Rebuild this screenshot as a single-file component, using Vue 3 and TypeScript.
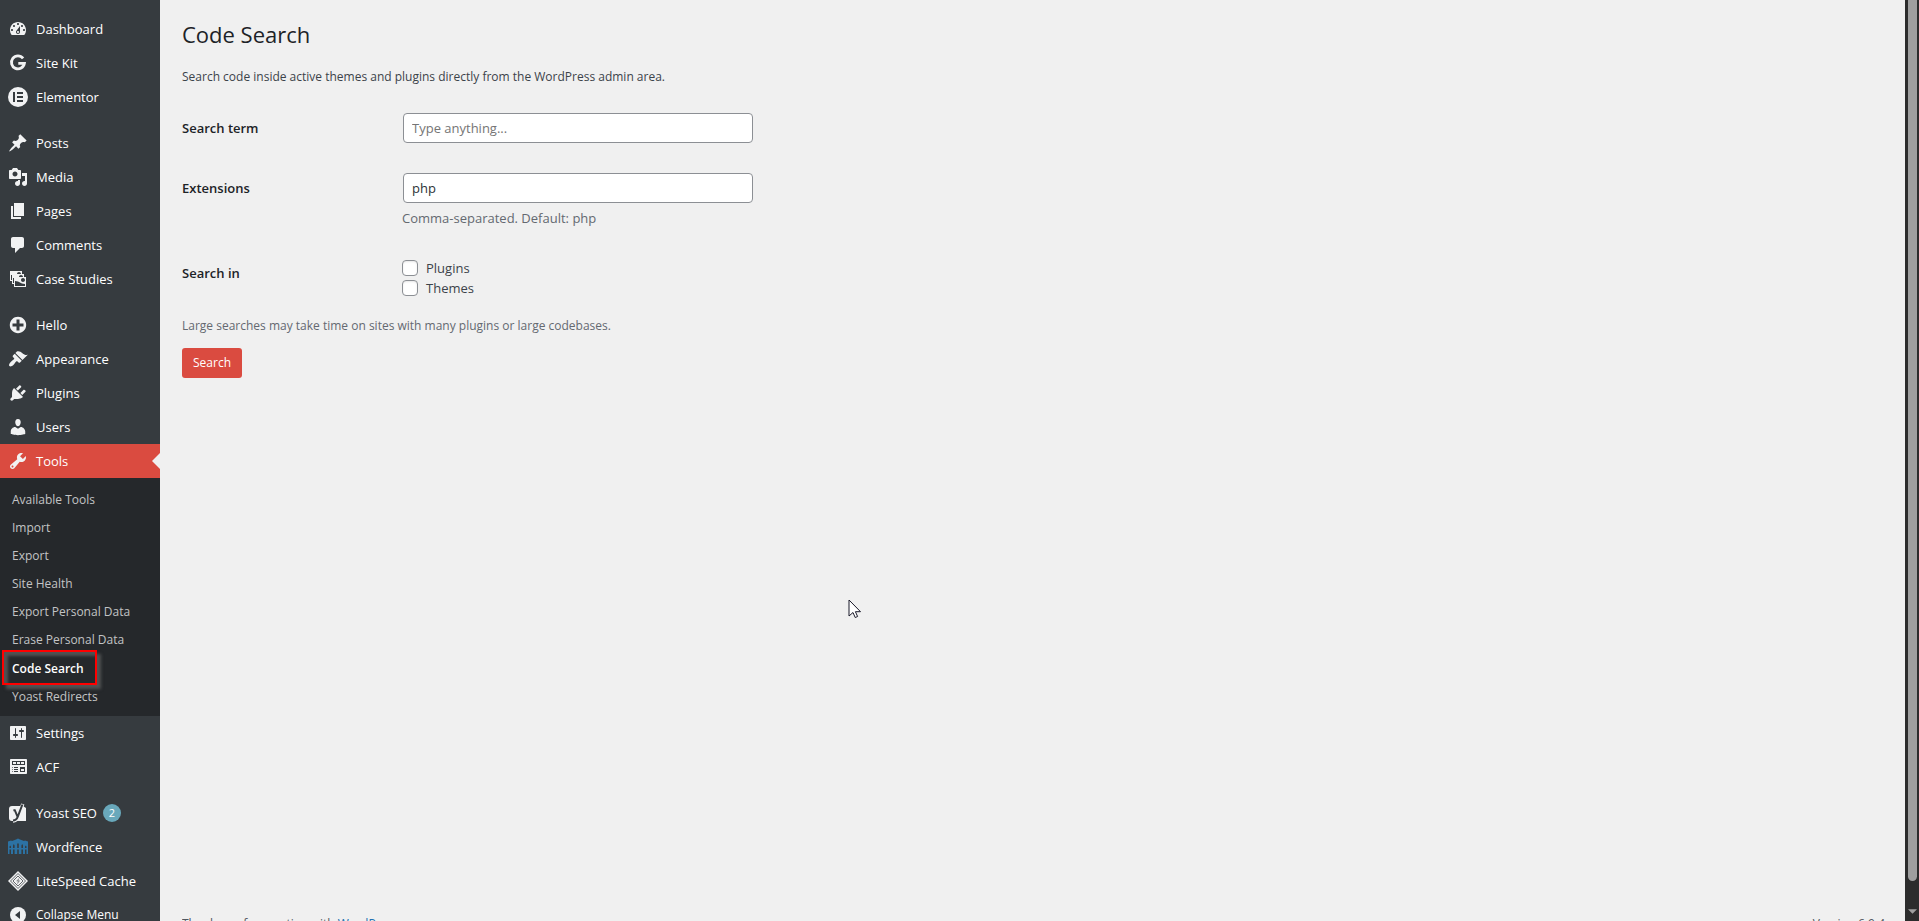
<script setup lang="ts">
import { ref } from 'vue'

interface MenuItem {
  label: string
  icon: string
  gap?: boolean
  current?: boolean
  badge?: number
}

const menu: MenuItem[] = [
  { label: 'Dashboard', icon: 'dashboard' },
  { label: 'Site Kit', icon: 'sitekit' },
  { label: 'Elementor', icon: 'elementor' },
  { label: 'Posts', icon: 'post', gap: true },
  { label: 'Media', icon: 'media' },
  { label: 'Pages', icon: 'page' },
  { label: 'Comments', icon: 'comments' },
  { label: 'Case Studies', icon: 'images' },
  { label: 'Hello', icon: 'plus', gap: true },
  { label: 'Appearance', icon: 'appearance' },
  { label: 'Plugins', icon: 'plugins' },
  { label: 'Users', icon: 'users' },
  { label: 'Tools', icon: 'tools', current: true },
  { label: 'Settings', icon: 'settings' },
  { label: 'ACF', icon: 'acf' },
  { label: 'Yoast SEO', icon: 'yoast', gap: true, badge: 2 },
  { label: 'Wordfence', icon: 'wordfence' },
  { label: 'LiteSpeed Cache', icon: 'litespeed' },
]

const submenu: string[] = [
  'Available Tools',
  'Import',
  'Export',
  'Site Health',
  'Export Personal Data',
  'Erase Personal Data',
  'Code Search',
  'Yoast Redirects',
]

const glyphs: Record<string, string> = {
  dashboard:
    'M3.76 16h12.48c1.12-1.37 1.76-3.11 1.76-5 0-4.42-3.58-8-8-8s-8 3.58-8 8c0 1.89.64 3.63 1.76 5zM10 4c.55 0 1 .45 1 1s-.45 1-1 1-1-.45-1-1 .45-1 1-1zM6 6c.55 0 1 .45 1 1s-.45 1-1 1-1-.45-1-1 .45-1 1-1zm8 0c.55 0 1 .45 1 1s-.45 1-1 1-1-.45-1-1 .45-1 1-1zm-5.37 5.55L12 7v6c0 1.1-.9 2-2 2s-2-.9-2-2c0-.57.24-1.08.63-1.45zM4 10c.55 0 1 .45 1 1s-.45 1-1 1-1-.45-1-1 .45-1 1-1zm12 0c.55 0 1 .45 1 1s-.45 1-1 1-1-.45-1-1 .45-1 1-1zm-5 3c0-.55-.45-1-1-1s-1 .45-1 1 .45 1 1 1 1-.45 1-1z',
  post: 'M10.44 3.02l1.82-1.82 6.36 6.35-1.83 1.82c-1.05-.68-2.48-.57-3.41.36l-.75.75c-.92.93-1.04 2.35-.35 3.41l-1.83 1.82-2.41-2.41-2.8 2.79c-.42.42-3.38 2.71-3.8 2.29s1.86-3.39 2.28-3.81l2.79-2.79L4.1 9.36l1.83-1.82c1.05.69 2.48.57 3.4-.36l.75-.75c.93-.92 1.05-2.35.36-3.41z',
  media:
    'M13 11V4c0-.55-.45-1-1-1h-1.67L9 1H5L3.67 3H2c-.55 0-1 .45-1 1v7c0 .55.45 1 1 1h10c.55 0 1-.45 1-1zM7 4.5c1.38 0 2.5 1.12 2.5 2.5S8.38 9.5 7 9.5 4.5 8.38 4.5 7 5.62 4.5 7 4.5zM14 6h5v10.5c0 1.38-1.12 2.5-2.5 2.5S14 17.88 14 16.5s1.12-2.5 2.5-2.5c.17 0 .34.02.5.05V9h-3V6zm-4 8.05V13h2v3.5c0 1.38-1.12 2.5-2.5 2.5S7 17.88 7 16.5 8.12 14 9.5 14c.17 0 .34.02.5.05z',
  page: 'M6 15V2h10v13H6zm-1 1h8v2H3V5h2v11z',
  comments:
    'M5 2h9c1.1 0 2 .9 2 2v7c0 1.1-.9 2-2 2h-2l-5 5v-5H5c-1.1 0-2-.9-2-2V4c0-1.1.9-2 2-2z',
  images:
    'M4 15v-3H2V2h12v3h2v3h2v10H6v-3H4zm7-12c-1.1 0-2 .9-2 2h4c0-1.1-.89-2-2-2zm-7 8V6H3v5h1zm7-3h4c0-1.1-.89-2-2-2-1.1 0-2 .9-2 2zm-5 6V9H5v5h1zm9-1c1.1 0 2-.89 2-2 0-1.1-.9-2-2-2s-2 .9-2 2c0 1.11.9 2 2 2zm2 4v-2c-5 0-5-3-10-3v5h10z',
  plus: 'M15.8 4.2c3.2 3.21 3.2 8.39 0 11.6-3.21 3.2-8.39 3.2-11.6 0C1 12.59 1 7.41 4.2 4.2 7.41 1 12.59 1 15.8 4.2zm-4.3 11.3v-4h4v-3h-4v-4h-3v4h-4v3h4v4h3z',
  appearance:
    'M14.48 11.06L7.41 3.99l1.5-1.5c.5-.56 2.3-.47 3.51.32 1.21.8 1.43 1.28 2.91 2.1 1.18.64 2.45 1.26 4.45.85zm-.71.71L6.7 4.7 4.93 6.47c-.39.39-.39 1.02 0 1.41l1.06 1.06c.39.39.39 1.03 0 1.42-.6.6-1.43 1.11-2.21 1.69-.35.26-.7.53-1.01.84C1.43 14.23.4 16.08 1.4 17.07c.99 1 2.84-.03 4.18-1.36.31-.31.58-.66.85-1.02.57-.78 1.08-1.61 1.69-2.21.39-.39 1.02-.39 1.41 0l1.06 1.06c.39.39 1.02.39 1.41 0z',
  plugins:
    'M13.11 4.36L9.87 7.6 8 5.73l3.24-3.24c.35-.34 1.05-.2 1.56.32.52.51.66 1.21.31 1.55zm-8 1.77l.91-1.12 9.01 9.01-1.19.84c-.71.71-2.63 1.16-3.82 1.16H6.14L4.9 17.26c-.59.59-1.54.59-2.12 0-.59-.58-.59-1.53 0-2.12l1.24-1.24v-3.88c0-1.13.4-3.19 1.09-3.89zm7.26 3.97l3.24-3.24c.34-.35 1.04-.21 1.55.31.52.51.66 1.21.31 1.55l-3.24 3.25z',
  users:
    'M10 9.25c-2.27 0-2.73-3.44-2.73-3.44C7 4.02 7.82 2 9.97 2c2.16 0 2.98 2.02 2.71 3.81 0 0-.41 3.44-2.68 3.44zm0 2.57L12.72 10c2.39 0 4.52 2.33 4.52 4.53v2.49s-3.65 1.13-7.24 1.13c-3.65 0-7.24-1.13-7.24-1.13v-2.49c0-2.25 1.94-4.48 4.47-4.48z',
  tools:
    'M16.68 9.77c-1.34 1.34-3.3 1.67-4.95.99l-5.41 6.52c-.99.99-2.59.99-3.58 0s-.99-2.59 0-3.57l6.52-5.42c-.68-1.65-.35-3.61.99-4.95 1.28-1.28 3.12-1.62 4.72-1.06l-2.89 2.89 2.82 2.82 2.86-2.87c.53 1.58.18 3.39-1.08 4.65zM3.81 16.21c.4.39 1.04.39 1.43 0 .4-.4.4-1.04 0-1.43-.39-.4-1.03-.4-1.43 0-.39.39-.39 1.03 0 1.43z',
  settings:
    'M18 16V4c0-.55-.45-1-1-1H3c-.55 0-1 .45-1 1v12c0 .55.45 1 1 1h14c.55 0 1-.45 1-1zM8 11h1c.55 0 1 .45 1 1s-.45 1-1 1H8v1.5c0 .28-.22.5-.5.5s-.5-.22-.5-.5V13H6c-.55 0-1-.45-1-1s.45-1 1-1h1V5.5c0-.28.22-.5.5-.5s.5.22.5.5V11zm5-2h-1c-.55 0-1-.45-1-1s.45-1 1-1h1V5.5c0-.28.22-.5.5-.5s.5.22.5.5V7h1c.55 0 1 .45 1 1s-.45 1-1 1h-1v5.5c0 .28-.22.5-.5.5s-.5-.22-.5-.5V9z',
  acf: 'M19 16V3c0-.55-.45-1-1-1H3c-.55 0-1 .45-1 1v13c0 .55.45 1 1 1h15c.55 0 1-.45 1-1zM4 4h13v4H4V4zm1 1v2h3V5H5zm4 0v2h3V5H9zm4 0v2h3V5h-3zm-8.5 5c.28 0 .5.22.5.5s-.22.5-.5.5-.5-.22-.5-.5.22-.5.5-.5zM6 10h4v1H6v-1zm6 0h5v5h-5v-5zm-7.5 2c.28 0 .5.22.5.5s-.22.5-.5.5-.5-.22-.5-.5.22-.5.5-.5zM6 12h4v1H6v-1zm7 0v2h3v-2h-3zm-8.5 2c.28 0 .5.22.5.5s-.22.5-.5.5-.5-.22-.5-.5.22-.5.5-.5zM6 14h4v1H6v-1z',
}

const term = ref('')
const extensions = ref('php')
const inPlugins = ref(false)
const inThemes = ref(false)
</script>

<template>
  <div class="screen">
    <nav class="sidebar" aria-label="Main menu">
      <ul class="menu">
        <li v-for="item in menu" :key="item.label" :class="{ gap: item.gap, current: item.current }">
          <a href="#" class="menu-link">
            <svg class="icon" viewBox="0 0 20 20" aria-hidden="true">
              <path v-if="glyphs[item.icon]" :d="glyphs[item.icon]" fill-rule="evenodd" />
              <path
                v-else-if="item.icon === 'sitekit'"
                class="stroke"
                stroke-width="2.8"
                d="M15.1 5.4A6.5 6.5 0 1 0 16.4 10.3H10.3"
              />
              <template v-else-if="item.icon === 'elementor'">
                <circle cx="10" cy="10" r="10" />
                <path class="hole" d="M5 5h2v10H5zM9 5h6v2H9zM9 9h6v2H9zM9 13h6v2H9z" />
              </template>
              <template v-else-if="item.icon === 'yoast'">
                <path d="M4 3h11l3 2v13H4a3 3 0 0 1-3-3V6a3 3 0 0 1 3-3z" />
                <path class="stroke" stroke-width="3.4" d="M14.8 1L10 14Q8.6 17.8 5 18" />
                <path class="hole-line" stroke-width="2" d="M5.4 7.2h1.400l2.800 6.600M14.400 1.500L9.800 13.600Q8.400 17.400 5 17.600" />
              </template>
              <template v-else-if="item.icon === 'wordfence'">
                <path
                  class="fence"
                  fill-rule="evenodd"
                  d="M0 4.500L3 3.500 4 4 8 2.500 10 1.500 12 2.500 16 4 17 3.500 20 4.500V17H18.500V9.500L17.800 8.500 17 9.500V17H15V8.500L14.200 7 13.400 8.500V17H10.800V7L10 6 9.200 7V17H6.600V8.500L5.800 7 5 8.500V17H3V9.500L2.200 8.500 1.500 9.500V17H0z"
                />
                <path class="fence" d="M1 11h18v1.500H1z" />
              </template>
              <template v-else>
                <path d="M10 0l10 10-10 10L0 10z" />
                <path class="ring" d="M10 2.500l7.500 7.500-7.500 7.500L2.500 10z" />
                <path class="ring" d="M10 5l5 5-5 5-5-5z" />
                <path class="bolt" d="M11.500 6.500L8 10.300h1.800l-.8 3.200 3.300-4h-1.700z" />
              </template>
            </svg>
            <span>{{ item.label }}</span>
            <span v-if="item.badge" class="badge">{{ item.badge }}</span>
          </a>
          <ul v-if="item.current" class="submenu">
            <li v-for="entry in submenu" :key="entry">
              <a href="#" :class="{ active: entry === 'Code Search' }">{{ entry }}</a>
            </li>
          </ul>
        </li>
        <li>
          <button type="button" class="menu-link collapse">
            <svg class="icon" viewBox="0 0 20 20" aria-hidden="true">
              <circle cx="10" cy="10" r="8" />
              <path class="hole" d="M12 6v8l-5-4z" />
            </svg>
            <span>Collapse Menu</span>
          </button>
        </li>
      </ul>
    </nav>

    <div class="page">
      <main class="content">
        <h1>Code Search</h1>
        <p class="intro">Search code inside active themes and plugins directly from the WordPress admin area.</p>
        <form @submit.prevent>
          <table class="form-table">
            <tbody>
              <tr>
                <th scope="row"><label for="term">Search term</label></th>
                <td><input id="term" v-model="term" class="field" type="text" placeholder="Type anything..." /></td>
              </tr>
              <tr>
                <th scope="row"><label for="extensions">Extensions</label></th>
                <td>
                  <input id="extensions" v-model="extensions" class="field" type="text" />
                  <p class="hint">Comma-separated. Default: php</p>
                </td>
              </tr>
              <tr>
                <th id="scope-label" scope="row">Search in</th>
                <td>
                  <fieldset aria-labelledby="scope-label">
                    <label class="option"><input v-model="inPlugins" type="checkbox" />Plugins</label>
                    <label class="option"><input v-model="inThemes" type="checkbox" />Themes</label>
                  </fieldset>
                </td>
              </tr>
            </tbody>
          </table>
          <p class="note">Large searches may take time on sites with many plugins or large codebases.</p>
          <button type="submit" class="submit">Search</button>
        </form>
      </main>
      <footer class="footer">
        <span>Thank you for creating with <a href="#">WordPress</a>.</span>
        <span>Version 6.9.4</span>
      </footer>
    </div>

    <div class="scrollbar" aria-hidden="true">
      <div class="thumb"></div>
      <svg class="arrow" viewBox="0 0 10 5"><path d="M0 0h10L5 5z" /></svg>
    </div>

    <svg class="pointer" viewBox="0 0 14 20" aria-hidden="true">
      <path d="M1 1v16l4-3.500 2.200 5 2.400-1-2.200-4.800H12.500z" />
    </svg>
  </div>
</template>

<style>
body {
  margin: 0;
  background: #f0f0f1;
}
</style>

<style scoped>
.screen {
  position: relative;
  display: flex;
  height: 100vh;
  overflow: hidden;
  background: #f0f0f0;
  color: #3c434a;
  font: 12px/20px "Open Sans", "Noto Sans", sans-serif;
}
ul {
  margin: 0;
  padding: 0;
  list-style: none;
}
a {
  text-decoration: none;
}
.sidebar {
  flex: 0 0 160px;
  background: #363b3f;
}
.menu {
  padding-top: 12px;
}
.gap {
  margin-top: 12px;
}
.menu-link {
  display: flex;
  align-items: center;
  gap: 8px;
  width: 100%;
  height: 34px;
  box-sizing: border-box;
  padding: 0 8px;
  border: 0;
  background: none;
  color: #fff;
  font: inherit;
  font-size: 13px;
  white-space: nowrap;
}
.collapse {
  font-size: 12px;
}
.icon {
  flex: none;
  width: 20px;
  height: 20px;
  fill: #f1f2f3;
}
.stroke {
  fill: none;
  stroke: #f1f2f3;
}
.hole {
  fill: #363b3f;
}
.hole-line {
  fill: none;
  stroke: #363b3f;
}
.fence {
  fill: #2c72a3;
}
.ring {
  fill: none;
  stroke: #63676b;
}
.bolt {
  fill: #8b8e91;
}
.current > .menu-link {
  position: relative;
  background: #da4b40;
}
.current > .menu-link::after {
  content: "";
  position: absolute;
  right: 0;
  top: 9px;
  border: 8px solid transparent;
  border-left: 0;
  border-right-color: #f0f0f0;
}
.badge {
  width: 18px;
  height: 18px;
  margin-left: -2px;
  border-radius: 9px;
  background: #69a8bb;
  font-size: 11px;
  line-height: 18px;
  text-align: center;
}
.submenu {
  padding: 8px 0 5px;
  background: #25282b;
}
.submenu a {
  position: relative;
  display: block;
  padding: 4px 12px;
  color: #c3c4c5;
}
.submenu .active {
  padding-top: 5px;
  color: #fff;
  font-weight: 600;
}
.submenu .active::after {
  content: "";
  position: absolute;
  left: 2px;
  top: -4px;
  width: 91px;
  height: 31px;
  border: 2px solid #f00;
  box-shadow: 4px 4px 3px #505253, inset 4px 4px 3px #505253;
}
.page {
  flex: 1;
  display: flex;
  flex-direction: column;
  padding: 0 20px 0 22px;
}
.content {
  flex: 1;
}
h1 {
  margin: 0;
  padding-top: 19px;
  color: #1d2327;
  font-size: 22px;
  font-weight: 400;
  line-height: 30px;
}
p {
  margin: 0;
}
.intro {
  padding: 18px 0 11px;
}
.form-table {
  border-spacing: 0;
  font-size: 13px;
}
th {
  width: 220px;
  padding: 20px 0;
  color: #1d2327;
  font-weight: 600;
  text-align: left;
  vertical-align: top;
}
td {
  padding: 15px 0;
  vertical-align: top;
}
.field {
  display: block;
  width: 350px;
  height: 30px;
  box-sizing: border-box;
  margin: 0 1px;
  padding: 0 8px;
  border: 1px solid #8c8f94;
  border-radius: 4px;
  background: #fff;
  color: #2c3338;
  font: inherit;
}
.field::placeholder {
  color: #757575;
  opacity: 1;
}
.hint {
  padding-top: 5px;
  color: #646970;
}
fieldset {
  margin: 0;
  padding: 0;
  border: 0;
}
.option {
  display: flex;
  align-items: center;
  gap: 8px;
}
.option input {
  appearance: none;
  width: 16px;
  height: 16px;
  margin: 0;
  border: 1px solid #8c8f94;
  border-radius: 4px;
  background: #fff;
  box-shadow: inset 0 1px 2px rgba(0, 0, 0, 0.1);
}
.note {
  padding-top: 3px;
  color: #646970;
}
.submit {
  display: block;
  height: 30px;
  margin-top: 12px;
  padding: 0 11px;
  border: 0;
  border-radius: 3px;
  background: #da4b40;
  color: #fff;
  font: inherit;
}
.footer {
  flex: 0 0 7px;
  display: flex;
  justify-content: space-between;
  overflow: hidden;
  color: #50575e;
}
.footer a {
  color: #2271b1;
}
.scrollbar {
  flex: 0 0 14px;
  display: flex;
  flex-direction: column;
  align-items: center;
  background: #2c2c2c;
}
.thumb {
  flex: 1;
  width: 9px;
  border-radius: 0 0 5px 5px;
  background: #9f9f9f;
}
.arrow {
  width: 9px;
  height: 5px;
  margin: 28px 0 7px;
  fill: #9f9f9f;
}
.pointer {
  position: absolute;
  left: 848px;
  top: 599px;
  width: 14px;
  height: 20px;
  fill: #fff;
  stroke: #1a1a2a;
}
</style>
